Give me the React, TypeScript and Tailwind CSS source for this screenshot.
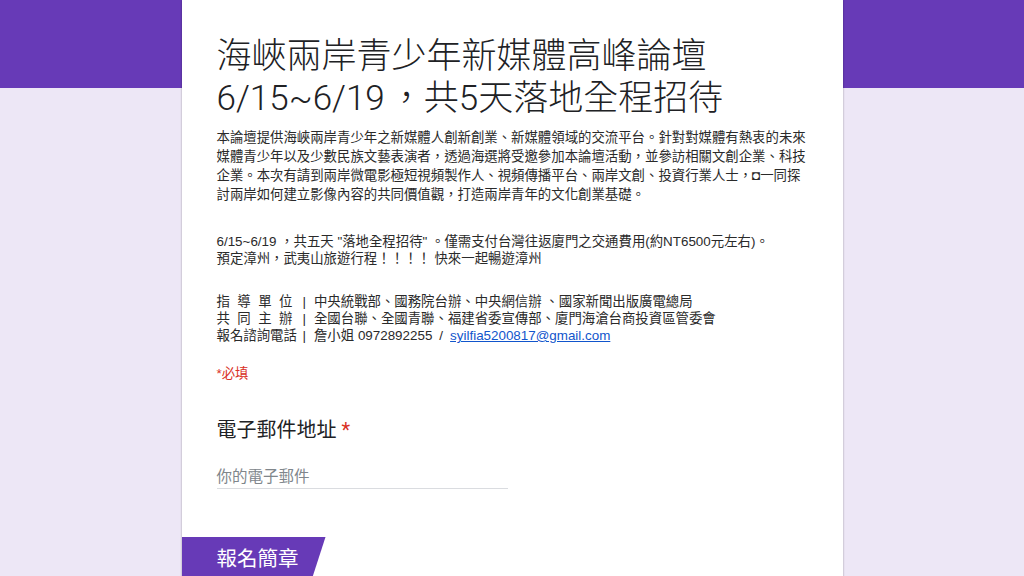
import React from 'react';

const bodyFont = "font-['Liberation_Sans','Noto_Sans_CJK_TC',sans-serif]";

function Spaced({ text }: { text: string }) {
  // label whose characters are spread over a fixed width
  return (
    <span className="inline-flex w-[76px] justify-between">
      {text.split('').map((c, i) => (
        <span key={i}>{c}</span>
      ))}
    </span>
  );
}

function InfoRow({ label, children }: { label: React.ReactNode; children: React.ReactNode }) {
  return (
    <div className="flex items-center">
      <span className="w-[86px] shrink-0">{label}</span>
      <span>|</span>
      <span className="ml-[8px]">{children}</span>
    </div>
  );
}

export default function App() {
  return (
    <div className="w-full h-[576px] overflow-hidden bg-[linear-gradient(to_bottom,#673ab7_88px,#ede7f6_88px)]">
      <div className="mx-auto w-[661px] min-h-[600px] bg-white shadow-[0_0_2px_rgba(0,0,0,0.35)]">
        <div className="pl-[35px] pr-[20px] pt-[36px]">
          {/* Title */}
          <h1 className="font-['Roboto','Noto_Sans_CJK_TC',sans-serif] font-light text-[35px] leading-[42px] text-[#202124] whitespace-nowrap">
            海峽兩岸青少年新媒體高峰論壇
            <br />
            6/15~6/19<span className="ml-[4px]">，</span>共5天落地全程招待
          </h1>

          {/* Description */}
          <div className={`${bodyFont} text-[13.4px] text-[#2a2a2a] whitespace-nowrap`}>
            <p className="mt-[8px] leading-[19px]">
              本論壇提供海峽兩岸青少年之新媒體人創新創業、新媒體領域的交流平台。針對對媒體有熱衷的未來
              <br />
              媒體青少年以及少數民族文藝表演者，透過海選將受邀參加本論壇活動，並參訪相關文創企業、科技
              <br />
              企業。本次有請到兩岸微電影極短視頻製作人、視頻傳播平台、兩岸文創、投資行業人士，◘一同探
              <br />
              討兩岸如何建立影像內容的共同價值觀，打造兩岸青年的文化創業基礎。
            </p>

            <p className="mt-[29px] leading-[17px]">
              6/15~6/19 ，共五天 "落地全程招待" 。僅需支付台灣往返廈門之交通費用(約NT6500元左右)。
              <br />
              預定漳州，武夷山旅遊行程！！！！ 快來一起暢遊漳州
            </p>

            <div className="mt-[26px] leading-[17px]">
              <InfoRow label={<Spaced text="指導單位" />}>
                中央統戰部、國務院台辦、中央網信辦 、國家新聞出版廣電總局
              </InfoRow>
              <InfoRow label={<Spaced text="共同主辦" />}>
                全國台聯、全國青聯、福建省委宣傳部、廈門海滄台商投資區管委會
              </InfoRow>
              <InfoRow label="報名諮詢電話">
                詹小姐 0972892255
                <span className="mx-[7px]">/</span>
                <a href="#" className="text-[#1155cc] underline">
                  syilfia5200817@gmail.com
                </a>
              </InfoRow>
            </div>

            <p className="mt-[21px] leading-[17px] text-[#d93025]">*必填</p>
          </div>

          {/* Email question */}
          <div className="mt-[34px] font-['Roboto','Noto_Sans_CJK_TC',sans-serif]">
            <div className="text-[20px] leading-[28px] text-[#202124]">
              電子郵件地址 <span className="text-[#d93025]">*</span>
            </div>
            <div className="mt-[22px] w-[291px] border-b border-[#dadce0] text-[15.5px] leading-[22px] text-[#80868b]">
              你的電子郵件
            </div>
          </div>
        </div>

        {/* Section header */}
        <div className="mt-[48px] w-[144px] h-[40px] bg-[#673ab7] [clip-path:polygon(0_0,100%_0,91%_100%,0_100%)] pl-[35px] flex items-center font-['Noto_Sans_CJK_TC',sans-serif] text-[20.5px] text-white">
          報名簡章
        </div>
      </div>
    </div>
  );
}
